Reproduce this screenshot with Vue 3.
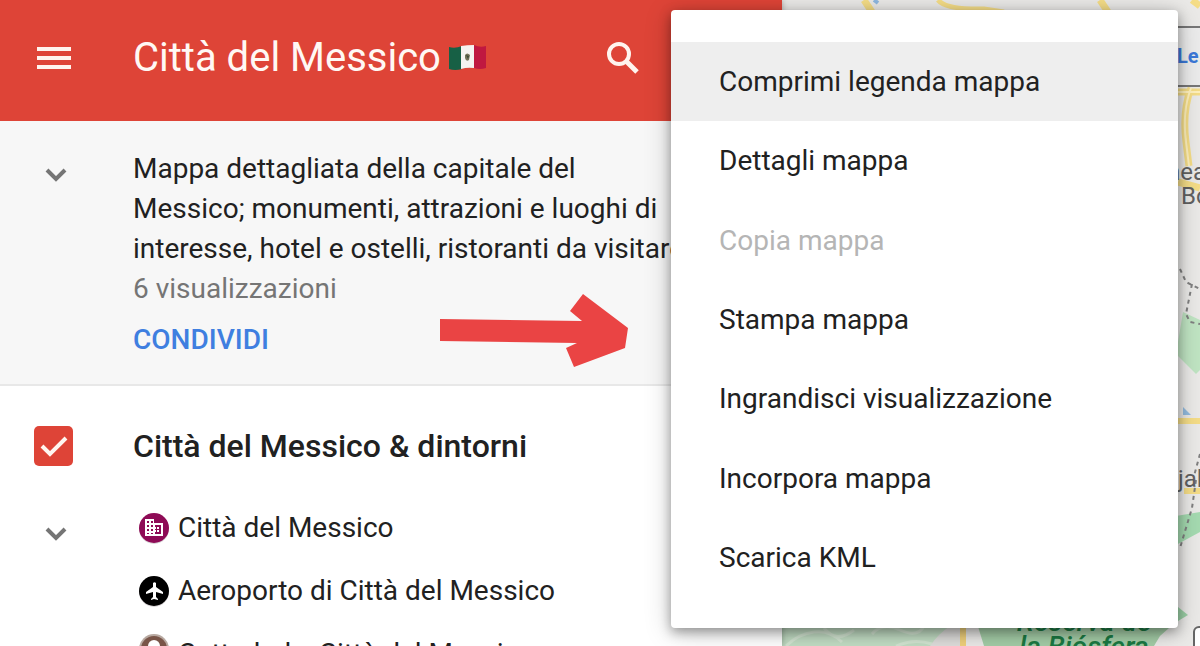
<script setup>
import { ref } from 'vue'

const layerVisible = ref(true)

const menuItems = [
  { label: 'Comprimi legenda mappa', active: true },
  { label: 'Dettagli mappa' },
  { label: 'Copia mappa', disabled: true },
  { label: 'Stampa mappa' },
  { label: 'Ingrandisci visualizzazione' },
  { label: 'Incorpora mappa' },
  { label: 'Scarica KML' },
]

const places = [
  { name: 'Città del Messico', icon: 'building', color: '#8e0b56' },
  { name: 'Aeroporto di Città del Messico', icon: 'plane', color: '#000000' },
  { name: 'Cattedrale, Città del Messico', icon: 'pin', color: '#795548' },
]
</script>

<template>
  <div class="page">
    <aside class="legend">
      <header class="bar">
        <button class="icon-btn" type="button" aria-label="Menu">
          <svg width="34" height="22" viewBox="0 0 34 22">
            <path d="M0 2h34M0 11h34M0 20h34" stroke="#fff4ee" stroke-width="4" />
          </svg>
        </button>
        <h1 class="title">
          Città del Messico
          <svg class="flag" width="37" height="26" viewBox="0 0 37 26" role="img" aria-label="Messico">
            <path d="M0 2Q6 4 13 1V24Q6 26 0 24Z" fill="#176045" />
            <path d="M12 1Q18 0 25 0V23Q18 22 12 24Z" fill="#f5f3f0" />
            <path d="M25 0Q31 3 37 1V23Q31 25 25 23Z" fill="#c01840" />
            <path d="M16 10q2-3 5 0l-1 5q-3 2-4-2Z" fill="#75735a" />
            <path d="M17 10l3 1-1 3Z" fill="#3b4a35" />
          </svg>
        </h1>
        <button class="icon-btn search" type="button" aria-label="Cerca">
          <svg width="34" height="34" viewBox="0 0 34 34" fill="none" stroke="#fff4ee">
            <circle cx="13" cy="13" r="10" stroke-width="4" />
            <path d="M20 20L31 31" stroke-width="5" />
          </svg>
        </button>
      </header>

      <section class="about">
        <button class="chevron" type="button" aria-label="Comprimi descrizione">
          <svg width="22" height="14" viewBox="0 0 22 14">
            <path d="M2 2l9 9 9-9" fill="none" stroke="#757575" stroke-width="4" />
          </svg>
        </button>
        <div class="about-body">
          <p class="text">Mappa dettagliata della capitale del Messico; monumenti, attrazioni e luoghi di interesse, hotel e ostelli, ristoranti da visitare</p>
          <p class="views">6 visualizzazioni</p>
          <a class="share" href="#">CONDIVIDI</a>
        </div>
      </section>

      <section class="layer">
        <label class="layer-head">
          <input v-model="layerVisible" class="check-input" type="checkbox">
          <span class="check">
            <svg v-if="layerVisible" width="28" height="22" viewBox="0 0 28 22">
              <path d="M2 11l8 8L26 3" fill="none" stroke="#fff6f0" stroke-width="4" />
            </svg>
          </span>
          <span class="layer-name">Città del Messico &amp; dintorni</span>
        </label>
        <div class="layer-body">
          <button class="chevron" type="button" aria-label="Comprimi livello">
            <svg width="22" height="14" viewBox="0 0 22 14">
              <path d="M2 2l9 9 9-9" fill="none" stroke="#757575" stroke-width="4" />
            </svg>
          </button>
          <ul class="places">
            <li v-for="place in places" :key="place.name" class="place">
              <svg v-if="place.icon === 'pin'" width="32" height="40" viewBox="0 0 32 40">
                <path d="M16 0a15 15 0 0 1 15 15q0 9-15 24Q1 24 1 15A15 15 0 0 1 16 0Z" fill="#b8a9a1" />
                <path d="M16 2a13 13 0 0 1 13 13q0 8-13 21Q3 23 3 15A13 13 0 0 1 16 2Z" :fill="place.color" />
                <circle cx="16" cy="12" r="6" fill="#fff" />
              </svg>
              <svg v-else width="32" height="32" viewBox="0 0 32 32">
                <circle cx="16" cy="17" r="15" fill="#d8d4d6" />
                <circle cx="16" cy="16" r="15" :fill="place.color" />
                <g v-if="place.icon === 'building'">
                  <path d="M7 7h9v4h9v13H7Z" fill="#fff" />
                  <path
                    d="M9 9h2v2H9zM13 9h2v2h-2zM9 13h2v2H9zM13 13h2v2h-2zM9 17h2v2H9zM13 17h2v2h-2zM9 21h2v1H9zM13 21h2v1h-2zM17 13h6v9h-6z"
                    :fill="place.color"
                  />
                  <path d="M17 15h4v2h-4zM17 18h4v2h-4z" fill="#fff" />
                  <path d="M18 15h1v2h-1zM18 18h1v2h-1z" :fill="place.color" />
                </g>
                <path
                  v-else
                  d="M25 19v-2l-7-5V8a2 2 0 0 0-3 0v4l-7 5v2l7-2v5l-2 2v1l3-1 4 1v-1l-2-2v-5Z"
                  fill="#fff"
                />
              </svg>
              <span>{{ place.name }}</span>
            </li>
          </ul>
        </div>
      </section>

      <svg class="arrow" width="190" height="76" viewBox="439 293 190 76">
        <path d="M440 319L582 321L570 311L583 294L628 328L625 348L574 367L566 348L577 343L440 341Z" fill="#ea4444" />
      </svg>
    </aside>

    <main class="map">
      <svg class="map-art" width="418" height="646" viewBox="782 0 418 646">
        <rect x="782" width="418" height="646" fill="#ebeae8" />
        <g fill="none" stroke="#f5dd87" stroke-width="7">
          <path d="M864 0l8 12" />
          <path d="M938 0q8 10 46 9l20 3" stroke-width="5" />
          <path d="M1100 0l8 12" />
          <path d="M1192 0l8 6" />
          <path d="M1176 92H1200M1191 88Q1182 112 1186 142L1189 166M1178 182l22 6" />
          <path d="M1176 421H1200M1184 491h16" stroke-width="6" />
          <path d="M963 626V646" stroke-width="6" />
        </g>
        <g fill="none" stroke="#fff1bd" stroke-width="2">
          <path d="M1176 92H1200M1191 88Q1182 112 1186 142L1189 166" />
        </g>
        <path d="M874 0l4 3" stroke="#8fb8e0" stroke-width="4" />
        <path d="M1183 312L1200 320V370L1196 374L1176 354Z" fill="#c0e5c3" />
        <path d="M1176 516L1200 512V532L1176 545Z" fill="#a5dbb1" />
        <path d="M1178 607l10 8-10 6Z" fill="#9bd0a6" />
        <path d="M1183 407l8 8h-8Z" fill="#93bce0" />
        <path d="M782 620H960V646H782Z" fill="#c2ddc4" />
        <path d="M786 646q12-12 28-14t28 10M824 628q12 16 30 2M872 634q10-12 28-4t24-4M896 646q18-8 36-2" fill="none" stroke="#d3e5d2" stroke-width="3" />
        <path d="M930 646q8-12 20-20h16v20Z" fill="#dedddb" />
        <path d="M963 626V646" stroke="#f0d17c" stroke-width="6" />
        <path d="M976 620H1178L1160 636 1154 646H984Z" fill="#a4cda7" />
        <g fill="none" stroke="#808080" stroke-width="2" stroke-dasharray="4 4">
          <path d="M1180 269l6 13 14 7M1192 284l-6 30 4 8 10 2M1200 454l-6 22M1196 480l-4 28-12 40" />
        </g>
        <rect x="1150" y="27" width="70" height="59" fill="#ececec" stroke="#777777" stroke-width="2" />
        <rect x="1194" y="627" width="30" height="40" rx="5" fill="#ffffff" stroke="#666666" stroke-width="2" />
        <text class="label link" x="1177" y="63">Le</text>
        <text class="label place-label" x="1167" y="180">nea</text>
        <text class="label place-label" x="1181" y="204">Bo</text>
        <text class="label place-label" x="1178" y="487">jal</text>
        <text class="label park" x="1084" y="631" text-anchor="middle">Reserva de</text>
        <text class="label park" x="1084" y="656" text-anchor="middle">la Biósfera</text>
      </svg>
    </main>

    <div class="menu" role="menu">
      <button
        v-for="item in menuItems"
        :key="item.label"
        class="menu-item"
        :class="{ active: item.active }"
        :disabled="item.disabled"
        type="button"
        role="menuitem"
      >
        {{ item.label }}
      </button>
    </div>
  </div>
</template>

<style>
html,
body {
  margin: 0;
  background: #ebeae8;
}
</style>

<style scoped>
.page {
  position: relative;
  display: flex;
  height: 100vh;
  overflow: hidden;
  font-family: Roboto, "Liberation Sans", sans-serif;
  font-size: 28px;
  line-height: 40px;
  color: #212121;
}

button {
  margin: 0;
  padding: 0;
  border: 0;
  background: none;
  font: inherit;
  color: inherit;
  cursor: pointer;
}

svg {
  display: block;
}

.legend {
  position: relative;
  z-index: 1;
  flex: 0 0 782px;
  background: #ffffff;
  box-shadow: 0 0 6px rgba(0, 0, 0, 0.3);
}

.bar {
  display: flex;
  align-items: center;
  box-sizing: border-box;
  height: 121px;
  padding: 0 142px 6px 37px;
  background: #de4437;
}

.title {
  display: flex;
  flex: 1;
  align-items: center;
  gap: 8px;
  margin: 0 0 0 62px;
  font-size: 40px;
  line-height: 48px;
  font-weight: 400;
  color: #fff8f4;
}

.about {
  display: flex;
  padding: 28px 92px 24px 0;
  border-bottom: 2px solid #e8e8e8;
  background: #f7f7f7;
}

.chevron {
  flex: 0 0 auto;
  align-self: flex-start;
  margin: 19px 66px 0 45px;
}

.about-body {
  flex: 1;
}

.text,
.views {
  margin: 0;
}

.views {
  color: #757575;
}

.share {
  display: inline-block;
  margin-top: 11px;
  font-weight: 500;
  color: #3f7fe0;
  text-decoration: none;
}

.layer-head {
  display: flex;
  align-items: center;
  padding: 40px 0 0 34px;
  cursor: pointer;
}

.check-input {
  position: absolute;
  opacity: 0;
}

.check {
  display: flex;
  align-items: center;
  justify-content: center;
  width: 39px;
  height: 40px;
  margin-right: 60px;
  border-radius: 5px;
  background: #de4437;
}

.layer-name {
  font-size: 32px;
  font-weight: 500;
}

.layer-body {
  display: flex;
  padding-top: 42px;
}

.places {
  margin: 0;
  padding: 0;
  list-style: none;
}

.place {
  display: flex;
  align-items: center;
  gap: 8px;
  margin: 0 0 23px 5px;
}

.arrow {
  position: absolute;
  left: 439px;
  top: 293px;
}

.map {
  flex: 1;
  overflow: hidden;
}

.label {
  font-family: Roboto, sans-serif;
}

.link {
  font-size: 20px;
  font-weight: 700;
  fill: #3b78d8;
}

.place-label {
  font-size: 24px;
  fill: #616161;
}

.park {
  font-size: 28px;
  font-weight: 500;
  font-style: italic;
  fill: #1b7a43;
}

.menu {
  position: absolute;
  z-index: 2;
  left: 671px;
  right: 22px;
  top: 10px;
  display: grid;
  grid-auto-rows: 1fr;
  box-sizing: border-box;
  min-height: 618px;
  padding: 32px 0 30px;
  border-radius: 4px;
  background: #ffffff;
  box-shadow: 0 4px 12px rgba(0, 0, 0, 0.35), 0 4px 28px rgba(0, 0, 0, 0.2);
}

.menu-item {
  padding: 0 48px;
  text-align: left;
}

.menu-item.active {
  background: #eeeeee;
}

.menu-item:disabled {
  color: #b5b5b5;
  cursor: default;
}
</style>
